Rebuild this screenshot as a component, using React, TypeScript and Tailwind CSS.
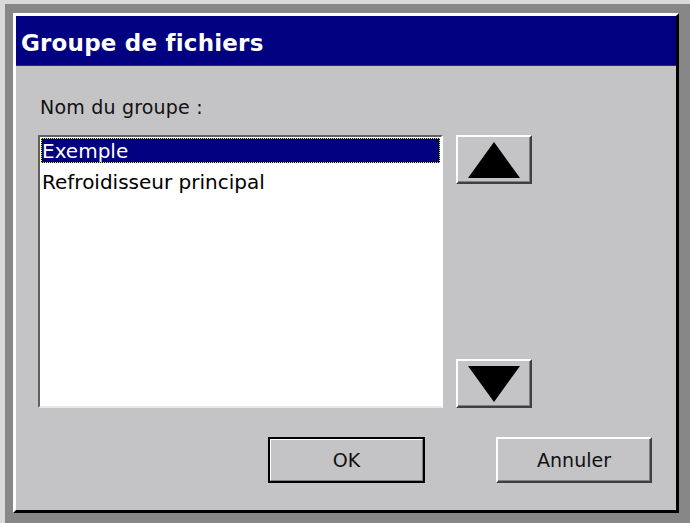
import React from "react";

const raised =
  "bg-[#c4c3c5] border-t-2 border-l-2 border-t-white border-l-white border-r-2 border-b-2 border-r-[#404040] border-b-[#404040] shadow-[inset_-1px_-1px_0_#808080]";

const ArrowButton = ({ dir }: { dir: "up" | "down" }) => (
  <button className={`${raised} w-[76px] h-[49px] flex items-center justify-center`}>
    <svg width="52" height="36" viewBox="0 0 52 36">
      {dir === "up" ? (
        <polygon points="26,0 52,36 0,36" fill="#000" />
      ) : (
        <polygon points="0,0 52,0 26,36" fill="#000" />
      )}
    </svg>
  </button>
);

export default function App() {
  const items = ["Exemple", "Refroidisseur principal"];

  return (
    <div
      className="w-[690px] h-[523px] flex bg-[#878787] border-t-4 border-l-[5px] border-[#d9d9d9] pt-[9px] pl-[8px] pr-[11px] pb-[10px]"
      style={{ fontFamily: '"DejaVu Sans", "Liberation Sans", sans-serif' }}
    >
      <div className="flex-1 flex flex-col bg-[#c4c3c5] border-t-[3px] border-l-[3px] border-t-white border-l-white border-r-[3px] border-b-[3px] border-r-black border-b-black">
        {/* title bar */}
        <div className="h-[50px] bg-[#000080] flex items-center pl-[5px] pt-[5px] border-b border-[#303030]">
          <span className="text-white font-bold text-[23px] tracking-[0.2px]">
            Groupe de fichiers
          </span>
        </div>

        <div className="flex-1 flex flex-col pl-[22px] pr-[24px]">
          <div className="mt-[29px] pl-[2px] text-[19px] tracking-[0.2px] text-[#111] h-[24px] leading-[24px]">
            Nom du groupe :
          </div>

          <div className="mt-[16px] flex gap-[13px]">
            {/* listbox */}
            <div className="w-[405px] h-[273px] border-t-2 border-l-2 border-t-[#606060] border-l-[#606060] border-r-2 border-b-2 border-r-white border-b-[#e8e8e8] shadow-[inset_1px_1px_0_#000]">
              <div className="h-full bg-white pl-[1px] pt-[1px] pr-[1px]">
                {items.map((it, i) => (
                  <div
                    key={it}
                    className={`h-[25px] leading-[25px] text-[20px] ${
                      i === 0
                        ? "bg-[#000080] text-white border border-dotted border-[#e8e060]"
                        : "text-black pl-[1px]"
                    } ${i === 1 ? "mt-[7px]" : ""}`}
                  >
                    {it}
                  </div>
                ))}
              </div>
            </div>

            <div className="flex flex-col justify-between h-[273px]">
              <ArrowButton dir="up" />
              <ArrowButton dir="down" />
            </div>
          </div>

          <div className="mt-[29px] flex justify-end gap-[71px]">
            <button className="w-[157px] h-[46px] border-2 border-black bg-[#c4c3c5] flex">
              <span className="flex-1 flex items-center justify-center border-t border-l border-white border-r border-b border-r-[#808080] border-b-[#808080] text-[19px] text-[#111]">
                OK
              </span>
            </button>
            <button className={`${raised} w-[156px] h-[46px] text-[19px] text-[#111]`}>
              Annuler
            </button>
          </div>
        </div>
      </div>
    </div>
  );
}
